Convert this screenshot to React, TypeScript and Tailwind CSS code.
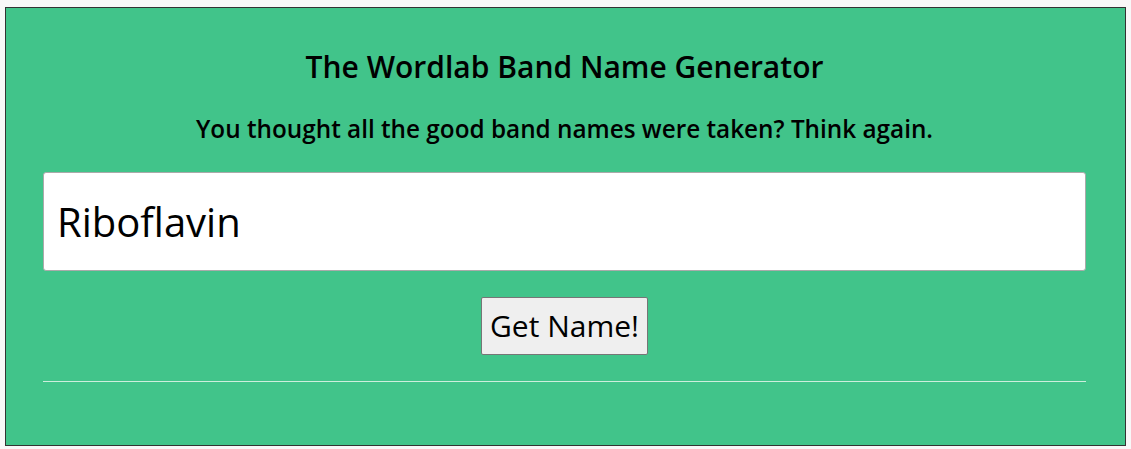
export default function App() {
  return (
    <div className="min-h-[449px] bg-[#f8f8f8] pt-[7px] px-[5px] pb-[3px]" style={{ fontFamily: '"Open Sans", sans-serif' }}>
      <div className="border border-[#333333] bg-[#41c48a] pl-[37px] pr-[39px] pt-[39px] h-[439px]">
        <h1 className="text-center text-[30px] font-semibold text-black leading-[40px]">The Wordlab Band Name Generator</h1>
        <p className="text-center text-[24.3px] font-semibold text-black mt-[26px] leading-[32px]">You thought all the good band names were taken? Think again.</p>
        <div className="mt-[27px] h-[99px] rounded-[3px] border border-[#aaaaaa] bg-white flex items-center px-[13px]">
          <span className="text-[40px] text-black leading-none">Riboflavin</span>
        </div>
        <div className="flex justify-center mt-[26px]">
          <button className="h-[58px] px-[8px] rounded-[2px] border border-[#767676] bg-[#efefef] text-[30px] text-black leading-none flex items-center">Get Name!</button>
        </div>
        <div className="mt-[26px] border-t border-[#cdeedd]" />
      </div>
    </div>
  );
}
